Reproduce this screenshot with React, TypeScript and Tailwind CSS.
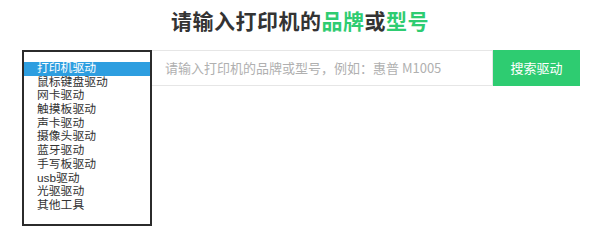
const DRIVER_TYPES = [
  '打印机驱动',
  '鼠标键盘驱动',
  '网卡驱动',
  '触摸板驱动',
  '声卡驱动',
  '摄像头驱动',
  '蓝牙驱动',
  '手写板驱动',
  'usb驱动',
  '光驱驱动',
  '其他工具',
]

const FONT = '"Noto Sans CJK SC", "Liberation Sans", sans-serif'
const LIST_FONT = '"Liberation Sans", "Noto Sans CJK SC", sans-serif'

export default function App() {
  return (
    <div className="w-[600px] h-[230px] bg-white text-[#333]" style={{ fontFamily: FONT }}>
      <h1 className="h-[38px] pt-[1px] text-center text-[21px] leading-[38px] font-bold tracking-[0.5px]">
        请输入打印机的<span className="text-[#2ecc71]">品牌</span>或
        <span className="text-[#2ecc71]">型号</span>
      </h1>

      <div className="mt-[12px] ml-[22px] flex items-start">
        {/* driver type list */}
        <div
          className="w-[130px] h-[176px] border-2 border-[#2b2b2b] bg-white pt-[10px]"
          style={{ fontFamily: LIST_FONT }}
        >
          {DRIVER_TYPES.map((t, i) => (
            <div
              key={t}
              className={
                'h-[13.7px] pl-[13px] text-[11.8px] leading-[13.7px] overflow-hidden ' +
                (i === 0 ? 'bg-[#2d9ee0] text-white' : 'text-[#333]')
              }
            >
              {t}
            </div>
          ))}
        </div>

        <div className="w-[341px] h-[36px] border border-l-0 border-[#e6e6e6] flex items-center pl-[13px]">
          <span className="text-[13px] text-[#b0b0b0]">请输入打印机的品牌或型号，例如：惠普 M1005</span>
        </div>

        <button
          type="button"
          className="w-[87px] h-[36px] bg-[#2ecc71] text-white text-[13px] flex items-center justify-center"
        >
          搜索驱动
        </button>
      </div>
    </div>
  )
}
